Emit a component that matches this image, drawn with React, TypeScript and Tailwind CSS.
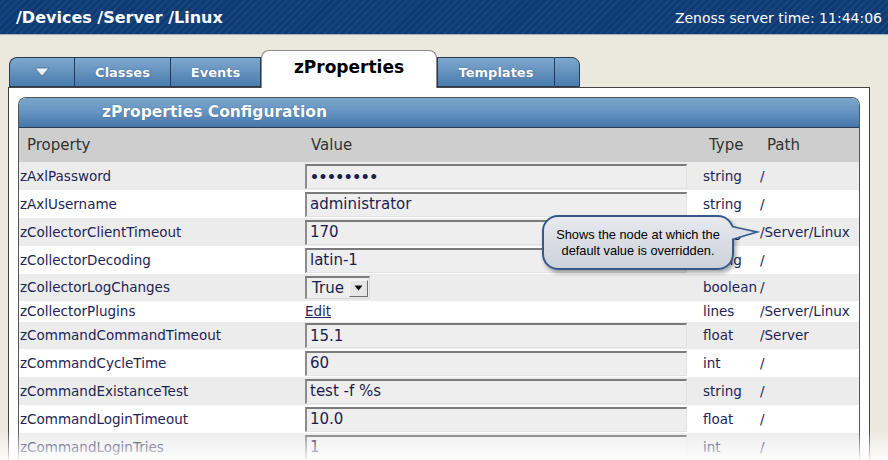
import React from "react";

type Row = {
  name: string;
  kind: "input" | "password" | "select" | "link";
  value?: string;
  type: string;
  path: string;
  h: string;
  grey: boolean;
};

const rows: Row[] = [
  { name: "zAxlPassword", kind: "password", value: "••••••••", type: "string", path: "/", h: "h-[28px]", grey: true },
  { name: "zAxlUsername", kind: "input", value: "administrator", type: "string", path: "/", h: "h-[28px]", grey: false },
  { name: "zCollectorClientTimeout", kind: "input", value: "170", type: "string", path: "/Server/Linux", h: "h-[28px]", grey: true },
  { name: "zCollectorDecoding", kind: "input", value: "latin-1", type: "string", path: "/", h: "h-[28px]", grey: false },
  { name: "zCollectorLogChanges", kind: "select", value: "True", type: "boolean", path: "/", h: "h-[27px]", grey: true },
  { name: "zCollectorPlugins", kind: "link", value: "Edit", type: "lines", path: "/Server/Linux", h: "h-[21px]", grey: false },
  { name: "zCommandCommandTimeout", kind: "input", value: "15.1", type: "float", path: "/Server", h: "h-[27px]", grey: true },
  { name: "zCommandCycleTime", kind: "input", value: "60", type: "int", path: "/", h: "h-[28px]", grey: false },
  { name: "zCommandExistanceTest", kind: "input", value: "test -f %s", type: "string", path: "/", h: "h-[28px]", grey: true },
  { name: "zCommandLoginTimeout", kind: "input", value: "10.0", type: "float", path: "/", h: "h-[28px]", grey: false },
  { name: "zCommandLoginTries", kind: "input", value: "1", type: "int", path: "/", h: "h-[28px]", grey: true },
];

function ValueCell({ r }: { r: Row }) {
  if (r.kind === "link") {
    return (
      <span className="text-[13.5px] text-[#1d2560] underline leading-none">{r.value}</span>
    );
  }
  if (r.kind === "select") {
    return (
      <div className="flex h-[23px] w-[65px] items-center border-t-2 border-l-2 border-b border-r border-t-[#7c7c7c] border-l-[#8a8a8a] border-b-[#d8d8d8] border-r-[#d8d8d8] bg-[#eeeeee]">
        <span className="pl-[5px] text-[15px] text-[#1b1d4d] leading-none flex-1">{r.value}</span>
        <div className="mr-[1px] flex h-[17px] w-[19px] items-center justify-center border border-t-[#f4f4f4] border-l-[#f4f4f4] border-b-[#6e6e6e] border-r-[#6e6e6e] bg-[#e6e6e6]">
          <svg width="9" height="6" viewBox="0 0 9 6">
            <polygon points="0.5,0.5 8.5,0.5 4.5,5.5" fill="#111" />
          </svg>
        </div>
      </div>
    );
  }
  return (
    <div className="flex h-[25px] w-[382px] items-center border-t-2 border-l-2 border-b border-r border-t-[#7a7a7a] border-l-[#8c8c8c] border-b-[#e2e2e2] border-r-[#e2e2e2] bg-[#eeeeee] pl-[3px]">
      {r.kind === "password" ? (
        <span className="text-[14px] font-bold tracking-[-0.5px] text-[#1b1d4d] leading-none">{r.value}</span>
      ) : (
        <span className="text-[15px] text-[#1b1d4d] leading-none">{r.value}</span>
      )}
    </div>
  );
}

export default function App() {
  return (
    <div
      className="relative h-[460px] w-[888px] overflow-hidden bg-[#ebe8de]"
      style={{ fontFamily: '"DejaVu Sans", Verdana, sans-serif' }}
    >
      {/* Header */}
      <div className="flex h-[35px] items-center justify-between border-b border-[#a9b3c0] bg-[repeating-linear-gradient(-45deg,#0f3a74_0px,#0f3a74_3px,#16457f_3px,#16457f_5px)] pl-[16px] pr-[6px]">
        <span className="pt-[2px] text-[16px] font-bold text-white">/Devices /Server /Linux</span>
        <span className="pt-[2px] text-[14px] text-white">Zenoss server time: 11:44:06</span>
      </div>

      {/* Tabs */}
      <div className="mt-[15px] flex items-end pl-[9px]">
        <div className="flex h-[30px] w-[65px] items-center justify-center rounded-tl-[8px] border border-r-0 border-[#2a3a52] bg-linear-to-b from-[#7ea8ce] to-[#4a7cae]">
          <svg width="16" height="10" viewBox="0 0 16 10">
            <polygon points="1,1 15,1 8,9" fill="#eef2f7" stroke="#4f6f91" strokeWidth="0.8" />
          </svg>
        </div>
        <div className="flex h-[30px] w-[96px] items-center justify-center border border-r-0 border-[#2a3a52] bg-linear-to-b from-[#7ea8ce] to-[#4a7cae]">
          <span className="pt-[2px] text-[13px] font-bold text-white [text-shadow:0_0_1px_#2c4f78]">Classes</span>
        </div>
        <div className="flex h-[30px] w-[91px] items-center justify-center border border-[#2a3a52] bg-linear-to-b from-[#7ea8ce] to-[#4a7cae]">
          <span className="pt-[2px] text-[13px] font-bold text-white [text-shadow:0_0_1px_#2c4f78]">Events</span>
        </div>
        <div className="relative z-10 -mb-px flex h-[38px] w-[176px] items-center justify-center rounded-t-[8px] border border-b-0 border-[#8a8a8a] bg-white">
          <span className="pb-[4px] text-[17px] font-bold text-black">zProperties</span>
        </div>
        <div className="flex h-[30px] w-[117px] items-center justify-center border border-r-0 border-[#2a3a52] bg-linear-to-b from-[#7ea8ce] to-[#4a7cae]">
          <span className="pt-[2px] text-[13px] font-bold text-white [text-shadow:0_0_1px_#2c4f78]">Templates</span>
        </div>
        <div className="h-[30px] w-[26px] rounded-tr-[8px] border border-[#2a3a52] bg-linear-to-b from-[#7ea8ce] to-[#4a7cae]" />
      </div>

      {/* White panel */}
      <div className="ml-[8px] w-[862px] border border-[#444] bg-white pl-[9px] pr-[9px] pt-[9px]">
        <div className="rounded-t-[8px] border border-b-0 border-[#555] bg-white">
          <div className="flex h-[30px] items-center rounded-t-[7px] border-b border-[#2b3c52] bg-linear-to-b from-[#7aa5cc] via-[#6592c0] to-[#4676aa] pl-[83px]">
            <span className="pt-[1px] text-[15.5px] font-bold text-white [text-shadow:0_0_1px_#2c4f78]">zProperties Configuration</span>
          </div>
          <div className="grid h-[34px] grid-cols-[284px_396px_58px_101px] items-center bg-[#cecece] text-[15px] text-[#333]">
            <span className="pl-[8px]">Property</span>
            <span className="pl-[8px]">Value</span>
            <span className="pl-[10px]">Type</span>
            <span className="pl-[10px]">Path</span>
          </div>
          {rows.map((r) => (
            <div
              key={r.name}
              className={`grid grid-cols-[284px_396px_58px_101px] items-center ${r.h} ${r.grey ? "bg-[#ececec]" : "bg-white"} text-[13.5px] text-[#1d2555]`}
            >
              <span className="pl-[1px]">{r.name}</span>
              <div className="pl-[2px]">
                <ValueCell r={r} />
              </div>
              <span className="pl-[4px]">{r.type}</span>
              <span className="whitespace-nowrap pl-[3px]">{r.path}</span>
            </div>
          ))}
        </div>
      </div>

      {/* Callout tooltip */}
      <div
        className="absolute left-[542px] top-[215px] flex h-[55px] w-[192px] flex-col items-center justify-center rounded-[16px] border-2 border-[#34598a] bg-linear-to-b from-[#e6e9ee] to-[#cdd2da] text-[12.8px] leading-[16px] text-black shadow-[2px_3px_4px_rgba(0,0,0,0.35)]"
        style={{ fontFamily: '"Liberation Sans", Arial, sans-serif' }}
      >
        <span>Shows the node at which the</span>
        <span>default value is overridden.</span>
      </div>
      <svg className="absolute left-[730px] top-[222px]" width="30" height="22" viewBox="0 0 30 22">
        <polygon points="0,4 27,10 0,18" fill="#dde1e7" />
        <polyline points="2,4.5 27,10 2,17.5" fill="none" stroke="#34598a" strokeWidth="1.6" />
      </svg>

      {/* Bottom fade */}
      <div className="pointer-events-none absolute bottom-0 left-0 right-0 h-[30px] bg-linear-to-b from-white/0 to-white/90" />
    </div>
  );
}
